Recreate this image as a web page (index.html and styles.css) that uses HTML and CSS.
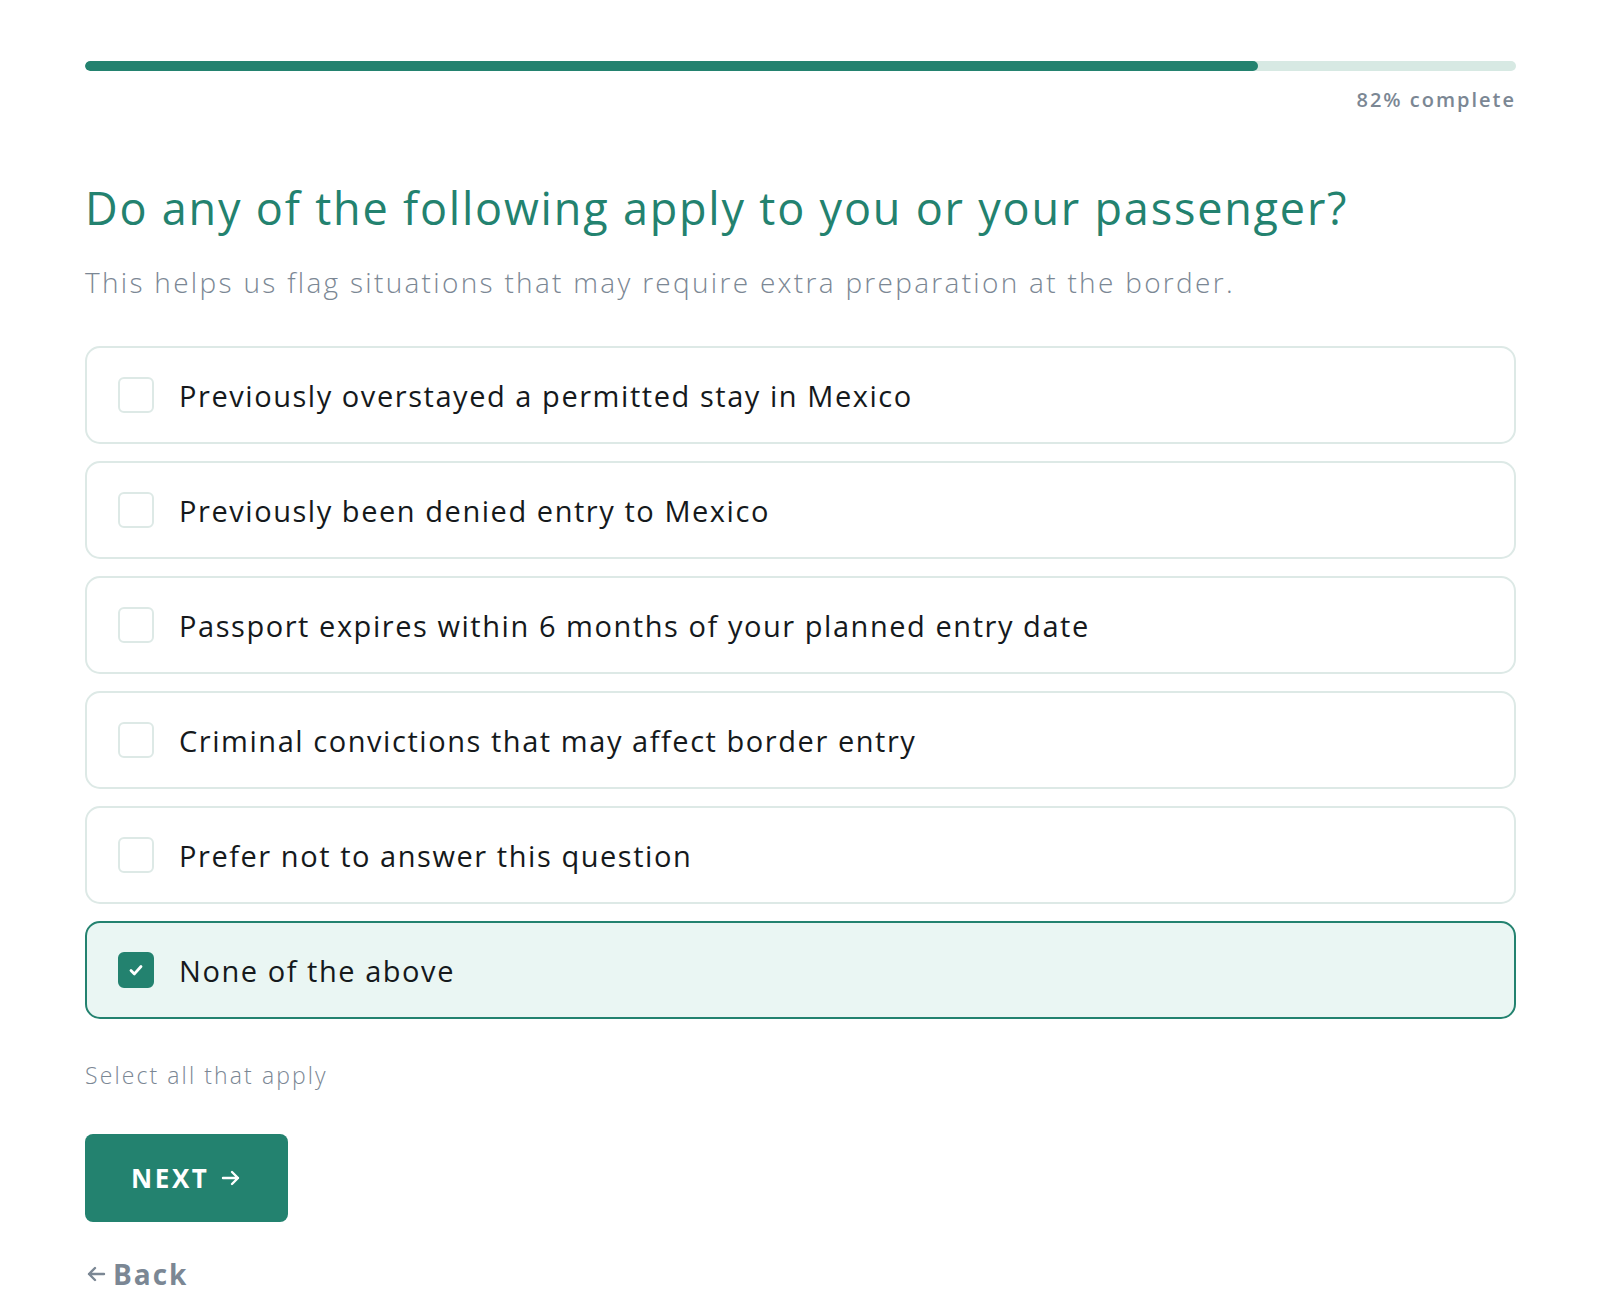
FILE: index.html
```html
<!DOCTYPE html>
<html>
<head>
    <meta charset="utf-8" />
    <title>Border check</title>
    <link rel="stylesheet" href="styles.css">
</head>
<body>
    <div class="page">
        <div class="progress"><div class="progress-fill" style="width: 82%"></div></div>
        <div class="progress-label">82% complete</div>

        <h1>Do any of the following apply to you or your passenger?</h1>
        <p class="lead">This helps us flag situations that may require extra preparation at the border.</p>

        <div class="options">
            <label class="option">
                <span class="box"></span>
                <span class="text">Previously overstayed a permitted stay in Mexico</span>
            </label>
            <label class="option">
                <span class="box"></span>
                <span class="text">Previously been denied entry to Mexico</span>
            </label>
            <label class="option">
                <span class="box"></span>
                <span class="text">Passport expires within 6 months of your planned entry date</span>
            </label>
            <label class="option">
                <span class="box"></span>
                <span class="text">Criminal convictions that may affect border entry</span>
            </label>
            <label class="option">
                <span class="box"></span>
                <span class="text">Prefer not to answer this question</span>
            </label>
            <label class="option checked">
                <span class="box">
                    <svg width="20" height="20" viewBox="0 0 20 20"><path d="M5 10.5l3.4 3.4L15 6.5" fill="none" stroke="#fff" stroke-width="2.8" stroke-linecap="round" stroke-linejoin="round"/></svg>
                </span>
                <span class="text">None of the above</span>
            </label>
        </div>

        <div class="hint">Select all that apply</div>

        <button class="next">NEXT
            <svg width="22" height="22" viewBox="0 0 22 22"><path d="M3 11h15M12 5l6 6-6 6" fill="none" stroke="#fff" stroke-width="2.4" stroke-linecap="round" stroke-linejoin="round"/></svg>
        </button>

        <a class="back" href="#">
            <svg width="22" height="22" viewBox="0 0 22 22"><path d="M19 11H4M10 5l-6 6 6 6" fill="none" stroke="#7b8794" stroke-width="2.4" stroke-linecap="round" stroke-linejoin="round"/></svg>
            Back
        </a>
    </div>
</body>
</html>
```

FILE: styles.css
```css
* {
    box-sizing: border-box;
}

html, body {
    margin: 0;
    padding: 0;
}

body {
    background: #fff;
    font-family: "Open Sans", Arial, sans-serif;
    color: #15191c;
}

.page {
    padding: 61px 84px 0 85px;
}

.progress {
    height: 10px;
    border-radius: 5px;
    background: #d7e9e3;
    overflow: hidden;
}

.progress-fill {
    height: 100%;
    border-radius: 5px;
    background: #23826f;
}

.progress-label {
    margin-top: 17px;
    text-align: right;
    font-size: 20px;
    line-height: 24px;
    font-weight: 600;
    letter-spacing: 2px;
    color: #7b8794;
}

h1 {
    margin: 68px 0 0;
    font-size: 45px;
    line-height: 56px;
    font-weight: 500;
    letter-spacing: 1.8px;
    color: #23826f;
}

.lead {
    margin: 27px 0 0;
    font-size: 28px;
    line-height: 38px;
    font-weight: 300;
    letter-spacing: 2.3px;
    color: #7b8794;
}

.options {
    display: flex;
    flex-direction: column;
    gap: 17px;
    margin-top: 45px;
}

.option {
    display: flex;
    align-items: center;
    gap: 25px;
    height: 98px;
    padding: 0 31px;
    border: 2px solid #dde9e6;
    border-radius: 15px;
    background: #fff;
    cursor: pointer;
}

.option .box {
    display: flex;
    align-items: center;
    justify-content: center;
    width: 36px;
    height: 36px;
    flex: none;
    border: 2px solid #dde9e6;
    border-radius: 6px;
}

.option .text {
    font-size: 29px;
    letter-spacing: 1.55px;
    color: #15191c;
}

.option.checked {
    background: #eaf6f3;
    border-color: #23826f;
}

.option.checked .box {
    background: #23826f;
    border-color: #23826f;
}

.hint {
    margin-top: 41px;
    font-size: 23px;
    line-height: 30px;
    font-weight: 300;
    letter-spacing: 2.1px;
    color: #7b8794;
}

.next {
    display: flex;
    align-items: center;
    gap: 10px;
    margin-top: 44px;
    height: 88px;
    padding: 0 46px;
    border: none;
    border-radius: 8px;
    background: #23826f;
    color: #fff;
    font-family: inherit;
    font-size: 26px;
    font-weight: 700;
    letter-spacing: 2.6px;
    cursor: pointer;
}

.back {
    display: inline-flex;
    align-items: center;
    gap: 6px;
    margin-top: 35px;
    font-size: 28px;
    line-height: 34px;
    font-weight: 700;
    letter-spacing: 2px;
    color: #7b8794;
    text-decoration: none;
}
```
